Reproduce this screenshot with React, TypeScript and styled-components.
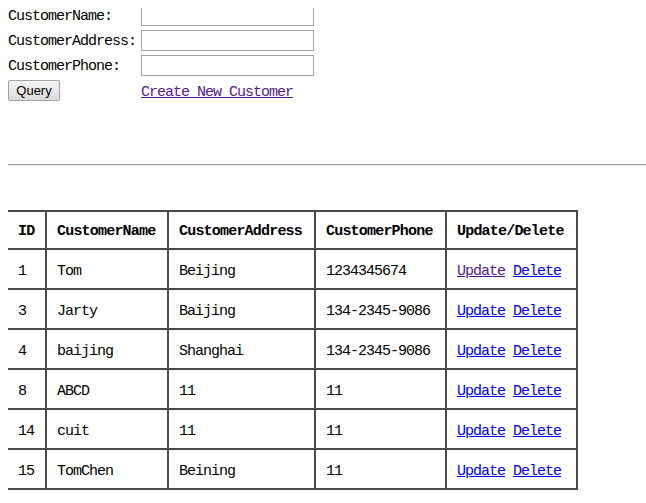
import styled, { createGlobalStyle } from "styled-components";

const GlobalStyle = createGlobalStyle`
  body {
    margin: 8px 0 8px 8px;
    background: #fff;
    color: #000;
    font-family: "Liberation Mono", "DejaVu Sans Mono", monospace;
    font-size: 15px;
    letter-spacing: -1px;
  }
`;

// <styled>
const SearchForm = styled.form`
  display: grid;
  grid-template-columns: 133px 173px;
  grid-auto-rows: 25px;
  align-items: center;
  margin-top: -5px;
`;

const Label = styled.label`
  line-height: 21px;
  padding-top: 2px;
`;

const TextInput = styled.input`
  box-sizing: border-box;
  width: 173px;
  height: 21px;
  margin: 0;
  border: 1px solid #a5a5a5;
  background: #fff;
`;

const QueryButton = styled.button`
  justify-self: start;
  box-sizing: border-box;
  width: 52px;
  height: 21px;
  margin-top: -1px;
  padding: 0;
  border: 1px solid #a3a3a3;
  border-radius: 2px;
  background: linear-gradient(#f4f4f4, #dcdcdc);
  font-family: "Liberation Sans", Arial, sans-serif;
  font-size: 13px;
  letter-spacing: 0;
  color: #000;
`;

const Anchor = styled.a<{ $visited?: boolean }>`
  color: ${(p) => (p.$visited ? "#551a8b" : "#0000ee")};
  text-decoration: underline;
  cursor: pointer;
`;

const CreateLink = styled(Anchor)`
  margin-top: 3px;
`;

const Divider = styled.hr`
  margin: 61px 0 0 -2px;
  border: 0;
  border-top: 1px solid #9a9a9a;
  border-bottom: 1px solid #eeeeee;
  height: 0;
`;

const Table = styled.table`
  margin: 44px 0 0 -2px;
  border-collapse: collapse;
  border: 2px solid #4a4a4a;
`;

const HeadCell = styled.th<{ $w: number }>`
  width: ${(p) => p.$w}px;
  height: 38px;
  box-sizing: border-box;
  padding: 3px 0 0 10px;
  border: 2px solid #4a4a4a;
  text-align: left;
  font-weight: bold;
  letter-spacing: -0.8px;
`;

const Cell = styled.td`
  height: 34px;
  padding: 4px 0 0 10px;
  border: 2px solid #4a4a4a;
  text-align: left;
`;

const Gap = styled.span`
  display: inline-block;
  width: 8px;
`;
// </styled>

interface Customer {
  id: number;
  name: string;
  address: string;
  phone: string;
}

const customers: Customer[] = [
  { id: 1, name: "Tom", address: "Beijing", phone: "1234345674" },
  { id: 3, name: "Jarty", address: "Baijing", phone: "134-2345-9086" },
  { id: 4, name: "baijing", address: "Shanghai", phone: "134-2345-9086" },
  { id: 8, name: "ABCD", address: "11", phone: "11" },
  { id: 14, name: "cuit", address: "11", phone: "11" },
  { id: 15, name: "TomChen", address: "Beining", phone: "11" },
];

const columns = [
  { title: "ID", w: 39 },
  { title: "CustomerName", w: 122 },
  { title: "CustomerAddress", w: 147 },
  { title: "CustomerPhone", w: 131 },
  { title: "Update/Delete", w: 131 },
];

function App() {
  return (
    <>
      <GlobalStyle />
      <SearchForm onSubmit={(e) => e.preventDefault()}>
        <Label>CustomerName:</Label>
        <TextInput />
        <Label>CustomerAddress:</Label>
        <TextInput />
        <Label>CustomerPhone:</Label>
        <TextInput />
        <QueryButton type="submit">Query</QueryButton>
        <CreateLink $visited>Create New Customer</CreateLink>
      </SearchForm>
      <Divider />
      <Table>
        <thead>
          <tr>
            {columns.map((c) => (
              <HeadCell key={c.title} $w={c.w}>
                {c.title}
              </HeadCell>
            ))}
          </tr>
        </thead>
        <tbody>
          {customers.map((c, i) => (
            <tr key={c.id}>
              <Cell>{c.id}</Cell>
              <Cell>{c.name}</Cell>
              <Cell>{c.address}</Cell>
              <Cell>{c.phone}</Cell>
              <Cell>
                <Anchor $visited={i === 0}>Update</Anchor>
                <Gap />
                <Anchor>Delete</Anchor>
              </Cell>
            </tr>
          ))}
        </tbody>
      </Table>
    </>
  );
}

export default App;
